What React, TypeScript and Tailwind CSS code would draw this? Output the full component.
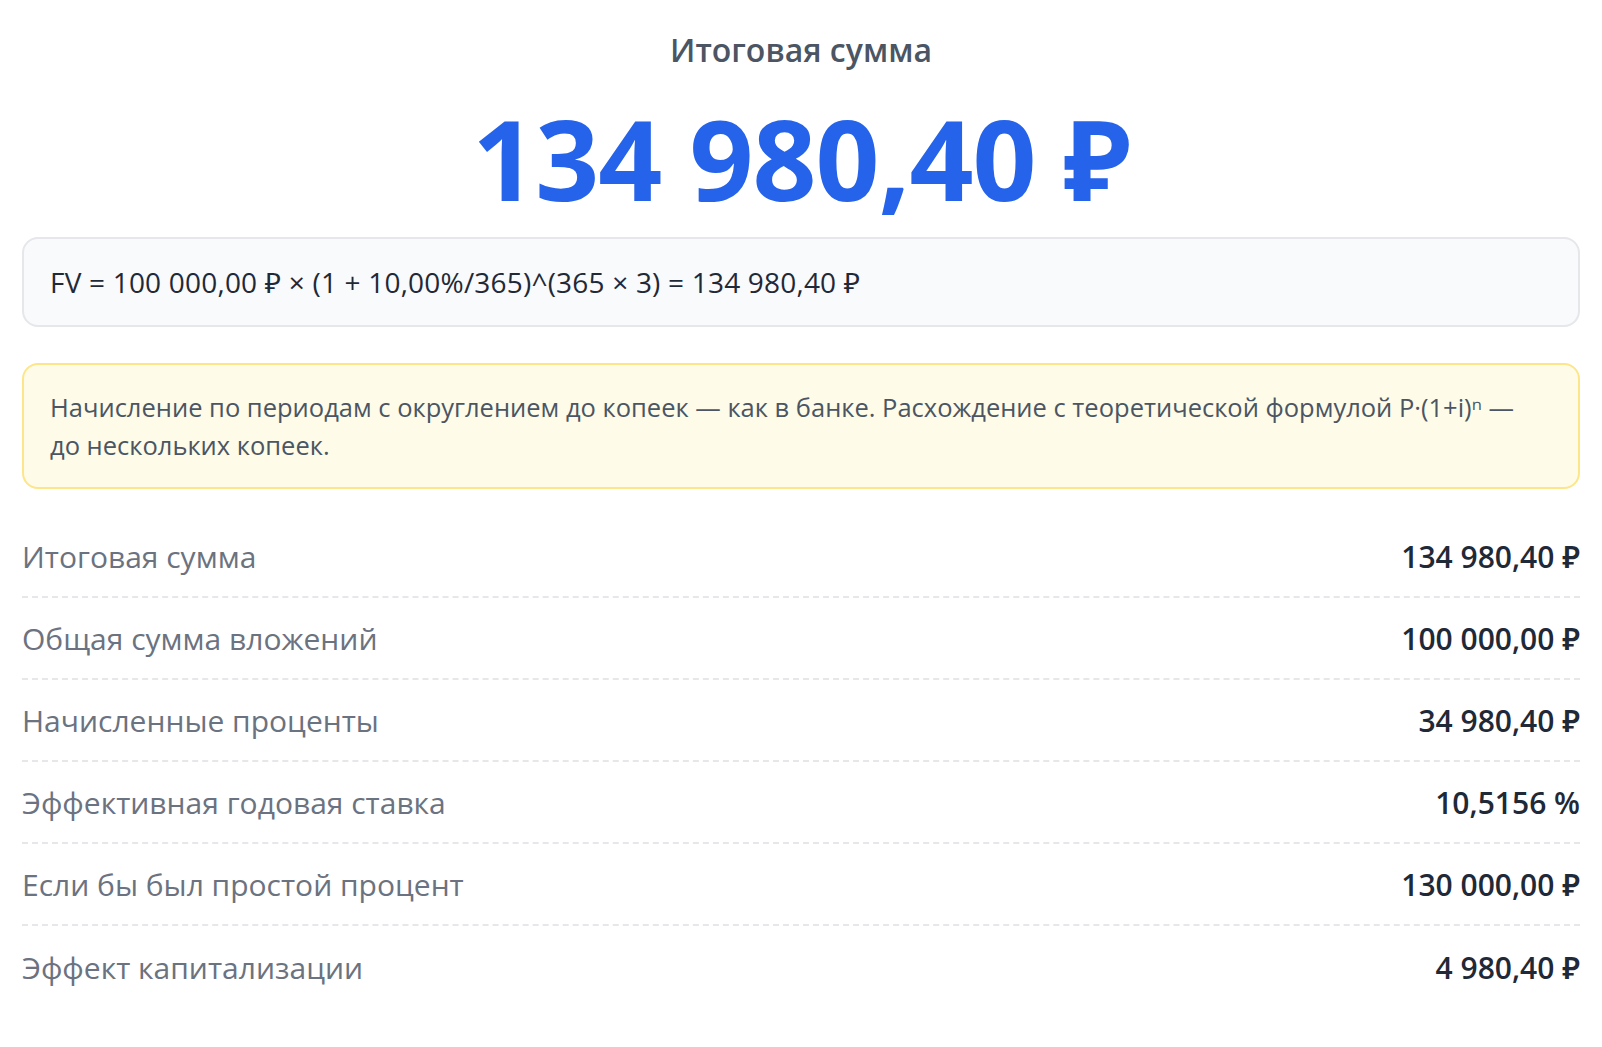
export default function App() {
  const rows = [
    ["Итоговая сумма", "134 980,40 ₽"],
    ["Общая сумма вложений", "100 000,00 ₽"],
    ["Начисленные проценты", "34 980,40 ₽"],
    ["Эффективная годовая ставка", "10,5156 %"],
    ["Если бы был простой процент", "130 000,00 ₽"],
    ["Эффект капитализации", "4 980,40 ₽"],
  ];
  return (
    <div className="min-h-[1047px] bg-white px-[22px] pt-[26px]" style={{ fontFamily: '"Open Sans", "Noto Sans", sans-serif' }}>
      <div className="text-center text-[32px] font-semibold text-[#4b5563] leading-[48px]">Итоговая сумма</div>
      <div className="mt-[26px] text-center text-[112px] font-bold text-[#2563eb] leading-[116px] tracking-[-1px]">134 980,40 ₽</div>
      <div className="mt-[21px] h-[90px] rounded-[16px] border-2 border-[#e5e7eb] bg-[#f8fafc] px-[26px] flex items-center text-[28px] text-[#1f2937] tracking-[0.2px]">
        FV = 100 000,00 ₽ × (1 + 10,00%/365)^(365 × 3) = 134 980,40 ₽
      </div>
      <div className="mt-[36px] rounded-[16px] border-2 border-[#fde68a] bg-[#fefce8] px-[26px] py-[23px] text-[25.5px] leading-[38px] text-[#4b5563]">
        Начисление по периодам с округлением до копеек — как в банке. Расхождение с теоретической формулой P·(1+i)ⁿ —<br />до нескольких копеек.
      </div>
      <div className="mt-[27px]">
        {rows.map(([l, v], i) => (
          <div key={i} className={`flex justify-between items-center h-[82px] ${i < rows.length - 1 ? "border-b-2 border-dashed border-[#e5e7eb]" : ""}`}>
            <span className="text-[30px] text-[#6b7280]">{l}</span>
            <span className="text-[30px] font-semibold text-[#1f2937]">{v}</span>
          </div>
        ))}
      </div>
    </div>
  );
}
